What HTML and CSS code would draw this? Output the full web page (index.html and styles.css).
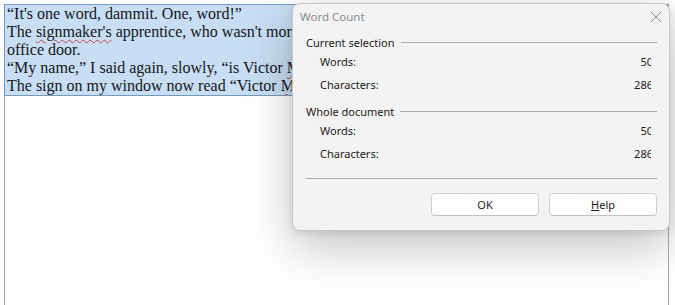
FILE: index.html
```html
<!DOCTYPE html>
<html lang="en">
<head>
  <meta charset="UTF-8" />
  <title>Word Count</title>
  <link rel="stylesheet" href="styles.css">
</head>
<body>

  <div class="page">
    <div class="selection">
      <div class="line">“It's one word, dammit. One, word!”</div>
      <div class="line">The <span class="spell">signmaker's</span> apprentice, who wasn't more than a boy, repainted the</div>
      <div class="line">office door.</div>
      <div class="line">“My name,” I said again, slowly, “is Victor <span class="spell">M</span>acbeth.”</div>
      <div class="line">The sign on my window now read “Victor <span class="spell">M</span>acbeth.”</div>
    </div>
  </div>

  <div class="dialog">
    <div class="titlebar">
      <span class="title">Word Count</span>
      <svg class="close" width="12" height="12" viewBox="0 0 12 12">
        <path d="M1 1 L11 11 M11 1 L1 11" stroke="#8c8c8c" stroke-width="1" fill="none" />
      </svg>
    </div>

    <div class="group">
      <div class="group-head"><span>Current selection</span><span class="rule"></span></div>
      <div class="row"><span>Words:</span><span class="value"><span>50</span></span></div>
      <div class="row"><span>Characters:</span><span class="value"><span>286</span></span></div>
    </div>

    <div class="group">
      <div class="group-head"><span>Whole document</span><span class="rule"></span></div>
      <div class="row"><span>Words:</span><span class="value"><span>50</span></span></div>
      <div class="row"><span>Characters:</span><span class="value"><span>286</span></span></div>
    </div>

    <div class="separator"></div>

    <div class="buttons">
      <button>OK</button>
      <button><u>H</u>elp</button>
    </div>
  </div>

</body>
</html>
```

FILE: styles.css
```css
* {
  box-sizing: border-box;
}

body {
  margin: 0;
  padding: 0;
  background-color: #fff;
  position: relative;
  height: 305px;
  overflow: hidden;
}

.page {
  margin: 4px 6px 0 4px;
  height: 301px;
  border-left: 1px solid #a9a9a9;
  border-right: 1px solid #a9a9a9;
}

.selection {
  margin-left: -1px;
  padding-left: 2px;
  background-color: #c7def4;
  border: 1px solid #6f9cc6;
  font-family: 'Liberation Serif', 'Times New Roman', serif;
  font-size: 16px;
  line-height: 18px;
  color: #151520;
  overflow: hidden;
}

.line {
  white-space: nowrap;
}

.spell {
  text-decoration: underline wavy #d04040;
  text-decoration-thickness: 1px;
  text-underline-offset: 2px;
}

/* dialog sits over the document */
.dialog {
  position: absolute;
  left: 292px;
  top: 3px;
  width: 378px;
  height: 228px;
  background-color: #f3f3f3;
  border: 1px solid #c8c8c8;
  border-radius: 8px;
  box-shadow: 0 16px 48px rgba(0, 0, 0, 0.24), 0 2px 8px rgba(0, 0, 0, 0.1);
  font-family: 'Noto Sans', 'Segoe UI', sans-serif;
  font-size: 11px;
  color: #1b1b1b;
  padding: 0 12px 0 13px;
}

.titlebar {
  display: flex;
  justify-content: space-between;
  align-items: center;
  height: 25px;
  margin-left: -6px;
  margin-right: -6px;
}

.title {
  color: #8a8a8a;
  font-size: 11.5px;
}

.close {
  margin-right: 1px;
}

.group {
  margin-top: 3px;
}

.group + .group {
  margin-top: 8px;
}

.group-head {
  display: flex;
  align-items: center;
  gap: 6px;
  height: 20px;
}

.rule {
  flex: 1;
  border-top: 1px solid #a8a8a8;
}

.row {
  display: flex;
  justify-content: space-between;
  align-items: center;
  height: 18px;
  padding-left: 14px;
}

.row + .row {
  margin-top: 5px;
}

.value {
  overflow: hidden;
  text-align: right;
  margin-right: 6px;
}

.value span {
  display: inline-block;
  margin-right: -2px;
}

.separator {
  margin-top: 16px;
  border-top: 1px solid #a8a8a8;
}

.buttons {
  display: flex;
  justify-content: flex-end;
  gap: 10px;
  margin-top: 14px;
}

button {
  width: 108px;
  height: 23px;
  background-color: #fdfdfd;
  border: 1px solid #d2d2d2;
  border-bottom-color: #c2c2c2;
  border-radius: 4px;
  font-family: 'Noto Sans', 'Segoe UI', sans-serif;
  font-size: 11px;
  color: #1b1b1b;
  padding: 0;
}
```
